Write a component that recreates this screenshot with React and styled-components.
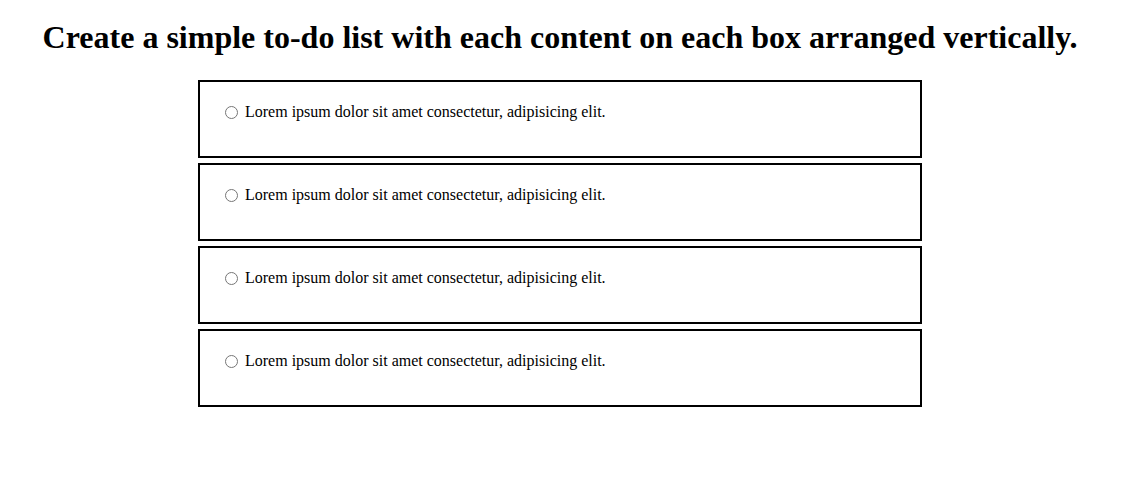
import React from "react"
import styled, { createGlobalStyle } from "styled-components"

const GlobalStyle = createGlobalStyle`
  body {
    margin: 8px;
    font-family: "Liberation Serif", "Times New Roman", serif;
    background: #fff;
    color: #000;
  }
`

const Page = styled.div`
  width: 1104px;
  display: flex;
  flex-direction: column;
  align-items: center;
`

const Title = styled.h1`
  font-size: 32px;
  font-weight: bold;
  margin: 11px 0 24px;
  text-align: center;
`

const TodoList = styled.div`
  display: flex;
  flex-direction: column;
  gap: 5px;
  width: 724px;
`

const TodoBox = styled.div`
  display: flex;
  align-items: flex-start;
  border: 2px solid #000;
  padding: 0 20px;
  box-sizing: border-box;
  height: 78px;
`

const TodoLabel = styled.label`
  display: flex;
  align-items: center;
  margin-top: 21px;
  font-size: 16px;
`

const Radio = styled.input`
  margin: 0 7px 0 5px;
  width: 13px;
  height: 13px;
`

const todos = [
  "Lorem ipsum dolor sit amet consectetur, adipisicing elit.",
  "Lorem ipsum dolor sit amet consectetur, adipisicing elit.",
  "Lorem ipsum dolor sit amet consectetur, adipisicing elit.",
  "Lorem ipsum dolor sit amet consectetur, adipisicing elit.",
]

const App = () => {
  return (
    <Page>
      <GlobalStyle />
      <Title>Create a simple to-do list with each content on each box arranged vertically.</Title>
      <TodoList>
        {todos.map((text, i) => (
          <TodoBox key={i}>
            <TodoLabel>
              <Radio type="radio" name={`todo-${i}`} />
              {text}
            </TodoLabel>
          </TodoBox>
        ))}
      </TodoList>
    </Page>
  )
}

export default App
